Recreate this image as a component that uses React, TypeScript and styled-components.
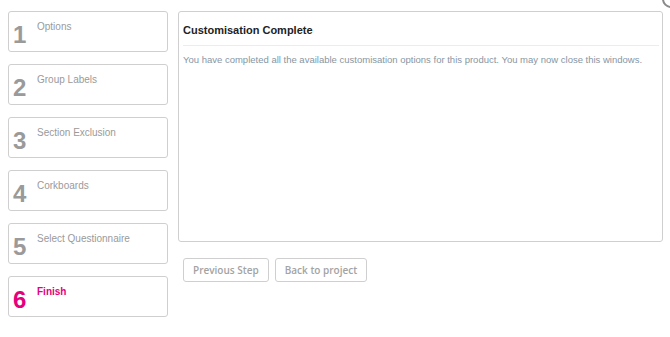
import React from 'react'
import styled, { createGlobalStyle } from 'styled-components'

const steps = [
    'Options',
    'Group Labels',
    'Section Exclusion',
    'Corkboards',
    'Select Questionnaire',
    'Finish',
]

const ACTIVE = 6

const App = () => {
    return (
        <>
            <GlobalStyle />
            <Page>
                <Sidebar>
                    {steps.map((label, i) => (
                        <Step key={label} active={i + 1 === ACTIVE}>
                            <StepNumber>{i + 1}</StepNumber>
                            <StepLabel>{label}</StepLabel>
                        </Step>
                    ))}
                </Sidebar>
                <Main>
                    <Panel>
                        <PanelTitle>Customisation Complete</PanelTitle>
                        <PanelBody>
                            You have completed all the available customisation options for this product. You may now close this windows.
                        </PanelBody>
                    </Panel>
                    <Actions>
                        <Button>Previous Step</Button>
                        <Button>Back to project</Button>
                    </Actions>
                </Main>
                <CloseButton />
            </Page>
        </>
    )
}

export default App

const GlobalStyle = createGlobalStyle`
    body {
        margin: 0;
        background: #fff;
        font-family: "Liberation Sans", Arial, sans-serif;
    }
`

const Page = styled.div`
    position: relative;
    width: 670px;
    height: 337px;
    overflow: hidden;
    display: flex;
    align-items: flex-start;
    padding: 11px 0 0 8px;
    box-sizing: border-box;
`

const Sidebar = styled.div`
    display: flex;
    flex-direction: column;
    gap: 12px;
    width: 160px;
`

const Step = styled.div<{ active?: boolean }>`
    display: flex;
    align-items: flex-start;
    height: 41px;
    box-sizing: border-box;
    border: 1px solid #cfcfcf;
    border-radius: 3px;
    padding: 8px 0 0 4px;
    color: ${props => props.active ? '#e5007d' : '#9a9a9a'};
    font-weight: ${props => props.active ? 700 : 400};
`

const StepNumber = styled.span`
    width: 24px;
    font-size: 24px;
    font-weight: 700;
    line-height: 30px;
`

const StepLabel = styled.span`
    font-size: 10px;
    line-height: 12px;
    margin-top: 1px;
`

const Main = styled.div`
    display: flex;
    flex-direction: column;
    margin-left: 10px;
    width: 485px;
`

const Panel = styled.div`
    height: 231px;
    box-sizing: border-box;
    border: 1px solid #cfcfcf;
    border-radius: 3px;
    padding: 0 3px 0 4px;
`

const PanelTitle = styled.div`
    font-size: 11px;
    font-weight: 700;
    color: #222;
    padding: 12px 0 9px 0;
    border-bottom: 1px solid #ececec;
`

const PanelBody = styled.div`
    font-size: 9.5px;
    color: #8796a3;
    padding-top: 8px;
`

const Actions = styled.div`
    display: flex;
    gap: 6px;
    margin: 16px 0 0 5px;
`

const Button = styled.button`
    height: 24px;
    padding: 0 9px;
    border: 1px solid #cfcfcf;
    border-radius: 3px;
    background: #fff;
    color: #a3a3a3;
    font-family: "Open Sans", sans-serif;
    font-size: 10px;
    font-weight: 600;
`

const CloseButton = styled.div`
    position: absolute;
    top: -10px;
    right: -10px;
    width: 14px;
    height: 14px;
    border-radius: 50%;
    border: 2px solid #8a8a8a;
    background: #fff;
`
